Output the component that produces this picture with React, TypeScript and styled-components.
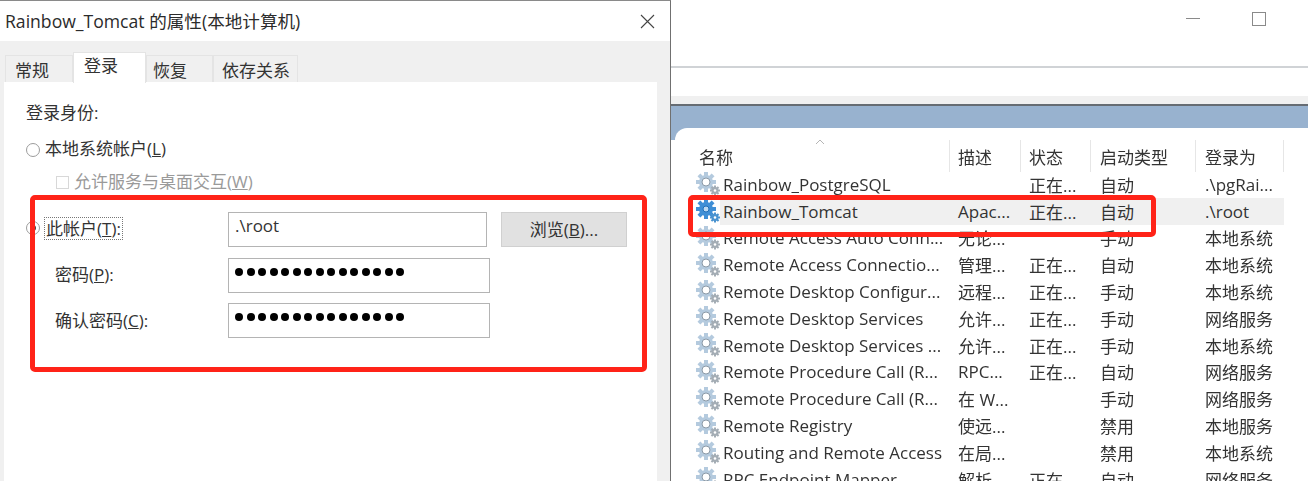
import React from "react";
import styled, { createGlobalStyle } from "styled-components";

const FONT = `"Open Sans", "Noto Sans CJK SC", sans-serif`;
const COLUMNS = "259px 71px 70px 105px 88px";

const GlobalStyle = createGlobalStyle`
  html, body { margin: 0; padding: 0; background: #fff; }
  body { width: 1308px; height: 481px; overflow: hidden; font-family: ${FONT}; color: #333; }
  * { box-sizing: border-box; }
`;

const Page = styled.div`
  position: relative;
  display: flex;
  width: 1308px;
  height: 481px;
  overflow: hidden;
  filter: blur(0.35px);
`;

/* dialog */
const Dialog = styled.div`
  width: 671px;
  height: 481px;
  flex: none;
  display: flex;
  flex-direction: column;
  background: #f0f0f0;
  border-top: 1px solid #8a8a8a;
  border-right: 1px solid #707070;
`;

const TitleBar = styled.div`
  height: 40px;
  flex: none;
  display: flex;
  align-items: center;
  justify-content: space-between;
  padding: 0 15px 0 5px;
  background: #fff;
  font-size: 17.6px;
  color: #2b2b2b;
`;

const TitleText = styled.span`
  margin-bottom: 2px;
`;

const Tabs = styled.div`
  height: 41px;
  flex: none;
  display: flex;
  align-items: flex-end;
  padding-left: 5px;
`;

const Tab = styled.div<{ $active?: boolean; $width: number; $pad: number }>`
  width: ${(p) => p.$width}px;
  height: ${(p) => (p.$active ? 31 : 27)}px;
  margin-bottom: ${(p) => (p.$active ? -1 : 0)}px;
  padding: ${(p) => (p.$active ? `0 0 7px ${p.$pad}px` : `0 0 0 ${p.$pad}px`)};
  display: flex;
  align-items: center;
  font-size: 17px;
  background: ${(p) => (p.$active ? "#fff" : "#f0f0f0")};
  border: 1px solid #e4e4e4;
  border-bottom: 0;
  position: relative;
`;

const Panel = styled.div`
  flex: 1;
  margin: 0 13px 0 4px;
  padding: 20px 0 0 22px;
  background: #fff;
  font-size: 17px;
`;

const Caption = styled.div`
  height: 22px;
  line-height: 22px;
`;

const OptionRow = styled.div<{ $muted?: boolean; $indent?: number; $top: number }>`
  display: flex;
  align-items: center;
  height: 22px;
  margin-top: ${(p) => p.$top}px;
  padding-left: ${(p) => p.$indent ?? 0}px;
  gap: 5px;
  color: ${(p) => (p.$muted ? "#9a9a9a" : "#333")};
`;

const Radio = styled.span<{ $checked?: boolean }>`
  width: 14px;
  height: 14px;
  flex: none;
  margin-top: ${(p) => (p.$checked ? 0 : 6)}px;
  border: 1px solid #9c9c9c;
  border-radius: 50%;
  display: flex;
  align-items: center;
  justify-content: center;
  background: #fff;
  &::after {
    content: "";
    width: 6px;
    height: 6px;
    border-radius: 50%;
    background: ${(p) => (p.$checked ? "#444" : "transparent")};
  }
`;

const Check = styled.span`
  width: 13px;
  height: 13px;
  flex: none;
  margin-top: 4px;
  border: 1px solid #d8d8d8;
`;

const FieldGrid = styled.div`
  margin-top: 21px;
  display: grid;
  grid-template-columns: 202px 262px 1fr;
  grid-auto-rows: 35px;
  row-gap: 10.5px;
`;

const FieldLabel = styled.div<{ $indent?: number }>`
  display: flex;
  align-items: center;
  gap: 5px;
  padding-left: ${(p) => p.$indent ?? 0}px;
  padding-bottom: 3px;
  height: 35px;
`;

const FocusText = styled.span`
  outline: 1px dotted #777;
  line-height: 21px;
  padding: 0 1px;
`;

const TextBox = styled.div<{ $width?: number; $lift: number }>`
  width: ${(p) => p.$width ?? 262}px;
  height: 100%;
  border: 1px solid #b4b4b4;
  display: flex;
  align-items: center;
  gap: 3.5px;
  padding: 0 0 ${(p) => p.$lift}px 6px;
  font-size: 17px;
  background: #fff;
`;

const Dot = styled.span`
  width: 8px;
  height: 8px;
  flex: none;
  border-radius: 50%;
  background: #000;
`;

const BrowseButton = styled.div`
  margin-left: 11px;
  width: 126px;
  height: 35px;
  padding-bottom: 2px;
  display: flex;
  align-items: center;
  justify-content: center;
  background: #e1e1e1;
  border: 1px solid #d0d0d0;
`;

/* services window behind */
const ServicesWindow = styled.div`
  flex: 1;
  display: flex;
  flex-direction: column;
  min-width: 0;
`;

const WindowTop = styled.div`
  height: 68px;
  flex: none;
  display: flex;
  justify-content: flex-end;
  gap: 52px;
  padding: 12px 42px 0 0;
  border-bottom: 2px solid #d0d3d6;
`;

const Minimize = styled.span`
  width: 14px;
  height: 1px;
  margin-top: 6px;
  background: #8a8a8a;
`;

const Maximize = styled.span`
  width: 14px;
  height: 14px;
  border: 1px solid #8a8a8a;
`;

const AddressGap = styled.div`
  height: 28px;
  flex: none;
`;

const GrayStrip = styled.div`
  height: 8px;
  flex: none;
  background: #f0f0f0;
`;

const BlueArea = styled.div`
  flex: 1;
  background: linear-gradient(#98b2cf 34px, #fff 34px);
  border-top: 2px solid #666c73;
  padding: 22px 0 0 4px;
  min-height: 0;
`;

const ListPanel = styled.div`
  height: 100%;
  background: #fff;
  border-top-left-radius: 12px;
  padding: 12px 0 0 16px;
  overflow: hidden;
  font-size: 17px;
`;

const HeaderRow = styled.div`
  display: grid;
  grid-template-columns: ${COLUMNS};
  height: 32px;
  margin-bottom: -1px;
`;

const HeaderCell = styled.div<{ $pad: number }>`
  display: flex;
  align-items: center;
  padding-left: ${(p) => p.$pad}px;
  border-right: 1px solid #e6e6e6;
  position: relative;
`;

const SortArrow = styled.svg`
  position: absolute;
  left: 124px;
  top: -1px;
`;

const Row = styled.div`
  display: grid;
  grid-template-columns: ${COLUMNS};
  height: 26.8px;
`;

const NameCell = styled.div`
  display: flex;
  align-items: center;
  padding-left: 5px;
  min-width: 0;
`;

const NameText = styled.span<{ $selected?: boolean }>`
  flex: 1;
  height: 100%;
  padding-left: 3px;
  display: flex;
  align-items: center;
  white-space: nowrap;
  background: ${(p) => (p.$selected ? "#f0f0f0" : "transparent")};
`;

const Cell = styled.div<{ $selected?: boolean; $pad: number }>`
  display: flex;
  align-items: center;
  padding-left: ${(p) => p.$pad}px;
  white-space: nowrap;
  background: ${(p) => (p.$selected ? "#f0f0f0" : "transparent")};
`;

/* red annotation boxes drawn on top of the screenshot */
const RedBox = styled.div<{ $x: number; $y: number; $w: number; $h: number }>`
  position: absolute;
  left: ${(p) => p.$x}px;
  top: ${(p) => p.$y}px;
  width: ${(p) => p.$w}px;
  height: ${(p) => p.$h}px;
  border: 5px solid #ff2318;
  border-radius: 5px;
`;

function CloseIcon() {
  return (
    <svg width="15" height="15" viewBox="0 0 15 15">
      <path d="M1 1l13 13M14 1L1 14" stroke="#444" strokeWidth="1.1" fill="none" />
    </svg>
  );
}

function Gear({ active }: { active?: boolean }) {
  const main = active ? "#3f8fd6" : "#b4cade";
  const hole = active ? "#bcd9f2" : "#fff";
  const inner = active ? "#1f6fb8" : "#8b9aa8";
  const small = active ? "#4a93d0" : "#a4adb5";
  const teeth = [0, 45, 90, 135, 180, 225, 270, 315];
  return (
    <svg width="24" height="24" viewBox="0 0 24 24">
      <g transform="translate(10 10)">
        {teeth.map((a) => (
          <rect key={a} x="-2" y="-10" width="4" height="5" fill={main} transform={`rotate(${a})`} />
        ))}
        <circle r="7" fill={main} />
        <circle r={active ? 3 : 4} fill={hole} stroke={inner} strokeWidth="1" />
      </g>
      <g transform="translate(19 18.5)">
        {teeth.map((a) => (
          <rect key={a} x="-1" y="-5" width="2" height="2.5" fill={small} transform={`rotate(${a})`} />
        ))}
        <circle r="3.4" fill={small} />
        <circle r="1.3" fill="#fff" />
      </g>
    </svg>
  );
}

const services = [
  ["Rainbow_PostgreSQL", "", "正在...", "自动", ".\\pgRai..."],
  ["Rainbow_Tomcat", "Apac...", "正在...", "自动", ".\\root"],
  ["Remote Access Auto Conn...", "无论...", "", "手动", "本地系统"],
  ["Remote Access Connectio...", "管理...", "正在...", "自动", "本地系统"],
  ["Remote Desktop Configur...", "远程...", "正在...", "手动", "本地系统"],
  ["Remote Desktop Services", "允许...", "正在...", "手动", "网络服务"],
  ["Remote Desktop Services ...", "允许...", "正在...", "手动", "本地系统"],
  ["Remote Procedure Call (R...", "RPC...", "正在...", "自动", "网络服务"],
  ["Remote Procedure Call (R...", "在 W...", "", "手动", "网络服务"],
  ["Remote Registry", "使远...", "", "禁用", "本地服务"],
  ["Routing and Remote Access", "在局...", "", "禁用", "本地系统"],
  ["RPC Endpoint Mapper", "解析...", "正在...", "自动", "网络服务"],
];

const dots = Array.from({ length: 15 }, (_, i) => i);

export default function App() {
  return (
    <Page>
      <GlobalStyle />
      <Dialog>
        <TitleBar>
          <TitleText>Rainbow_Tomcat 的属性(本地计算机)</TitleText>
          <CloseIcon />
        </TitleBar>
        <Tabs>
          <Tab $width={68} $pad={9}>常规</Tab>
          <Tab $width={73} $pad={10} $active>登录</Tab>
          <Tab $width={67} $pad={6}>恢复</Tab>
          <Tab $width={85} $pad={8}>依存关系</Tab>
        </Tabs>
        <Panel>
          <Caption>登录身份:</Caption>
          <OptionRow $top={12}>
            <Radio />
            <span>本地系统帐户(<u>L</u>)</span>
          </OptionRow>
          <OptionRow $top={11} $indent={30} $muted>
            <Check />
            <span>允许服务与桌面交互(<u>W</u>)</span>
          </OptionRow>
          <FieldGrid>
            <FieldLabel>
              <Radio $checked />
              <FocusText>此帐户(<u>T</u>):</FocusText>
            </FieldLabel>
            <TextBox $width={259} $lift={9}>.\root</TextBox>
            <BrowseButton><span>浏览(<u>B</u>)...</span></BrowseButton>
            <FieldLabel $indent={29}><span>密码(<u>P</u>):</span></FieldLabel>
            <TextBox $lift={7}>
              {dots.map((d) => <Dot key={d} />)}
            </TextBox>
            <span />
            <FieldLabel $indent={29}><span>确认密码(<u>C</u>):</span></FieldLabel>
            <TextBox $lift={7}>
              {dots.map((d) => <Dot key={d} />)}
            </TextBox>
          </FieldGrid>
        </Panel>
      </Dialog>

      <ServicesWindow>
        <WindowTop>
          <Minimize />
          <Maximize />
        </WindowTop>
        <AddressGap />
        <GrayStrip />
        <BlueArea>
          <ListPanel>
            <HeaderRow>
              <HeaderCell $pad={8}>
                名称
                <SortArrow width="10" height="6" viewBox="0 0 10 6">
                  <path d="M1 5l4-4 4 4" stroke="#b5b5b5" fill="none" />
                </SortArrow>
              </HeaderCell>
              <HeaderCell $pad={8}>描述</HeaderCell>
              <HeaderCell $pad={8}>状态</HeaderCell>
              <HeaderCell $pad={9}>启动类型</HeaderCell>
              <HeaderCell $pad={9}>登录为</HeaderCell>
            </HeaderRow>
            {services.map(([name, desc, status, start, login], i) => {
              const selected = i === 1;
              return (
                <Row key={i}>
                  <NameCell>
                    <Gear active={selected} />
                    <NameText $selected={selected}>{name}</NameText>
                  </NameCell>
                  <Cell $pad={8} $selected={selected}>{desc}</Cell>
                  <Cell $pad={8} $selected={selected}>{status}</Cell>
                  <Cell $pad={9} $selected={selected}>{start}</Cell>
                  <Cell $pad={9} $selected={selected}>{login}</Cell>
                </Row>
              );
            })}
          </ListPanel>
        </BlueArea>
      </ServicesWindow>

      <RedBox $x={30} $y={195} $w={617} $h={177} />
      <RedBox $x={688} $y={195} $w={468} $h={42} />
    </Page>
  );
}
